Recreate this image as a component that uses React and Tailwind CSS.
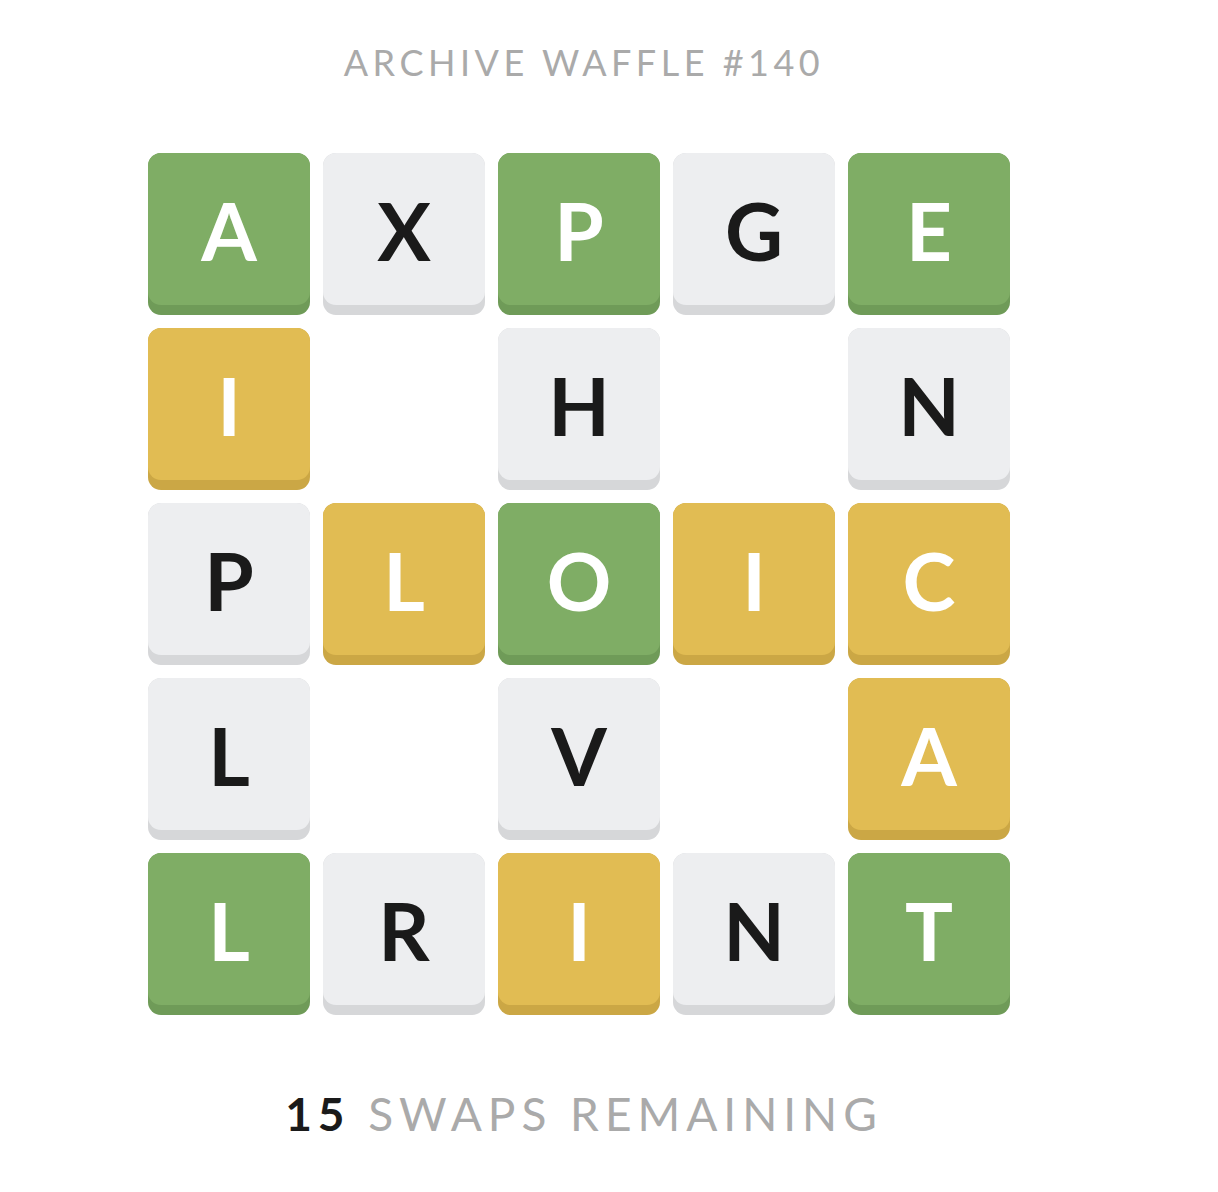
const BOARD = [
  ['A', 'g'], ['X', 'n'], ['P', 'g'], ['G', 'n'], ['E', 'g'],
  ['I', 'y'], null, ['H', 'n'], null, ['N', 'n'],
  ['P', 'n'], ['L', 'y'], ['O', 'g'], ['I', 'y'], ['C', 'y'],
  ['L', 'n'], null, ['V', 'n'], null, ['A', 'y'],
  ['L', 'g'], ['R', 'n'], ['I', 'y'], ['N', 'n'], ['T', 'g'],
]

const STYLES = {
  g: { base: 'bg-[#6f9b58]', face: 'bg-[#7fad65]', text: 'text-white' },
  y: { base: 'bg-[#cba745]', face: 'bg-[#e1bc53]', text: 'text-white' },
  n: { base: 'bg-[#d6d7d9]', face: 'bg-[#edeef0]', text: 'text-[#1a1a1a]' },
}

function Tile({ letter, kind }) {
  const s = STYLES[kind]
  return (
    <div className={'h-[162px] w-[162px] rounded-[13px] ' + s.base}>
      <div
        className={
          'flex h-[152px] items-center justify-center rounded-[13px] pt-[2px] text-[80px] font-bold leading-none ' +
          s.face + ' ' + s.text
        }
      >
        {letter}
      </div>
    </div>
  )
}

export default function App() {
  return (
    <div
      className="flex w-[1158px] flex-col items-center bg-white"
      style={{ fontFamily: 'Lato, "Noto Sans", sans-serif' }}
    >
      <h1 className="mt-[42px] pl-[10px] text-[36px] font-normal uppercase leading-[40px] tracking-[0.125em] text-[#aaaaaa]">
        Archive Waffle #140
      </h1>

      <div className="mt-[71px] grid grid-cols-[repeat(5,162px)] gap-[13px]">
        {BOARD.map((t, i) =>
          t ? <Tile key={i} letter={t[0]} kind={t[1]} /> : <div key={i} />,
        )}
      </div>

      <p className="mt-[73px] pl-[10px] text-[46px] uppercase leading-[52px] tracking-[0.13em] text-[#aaaaaa]">
        <span className="font-bold text-[#1a1a1a]">15</span> swaps remaining
      </p>
    </div>
  )
}
